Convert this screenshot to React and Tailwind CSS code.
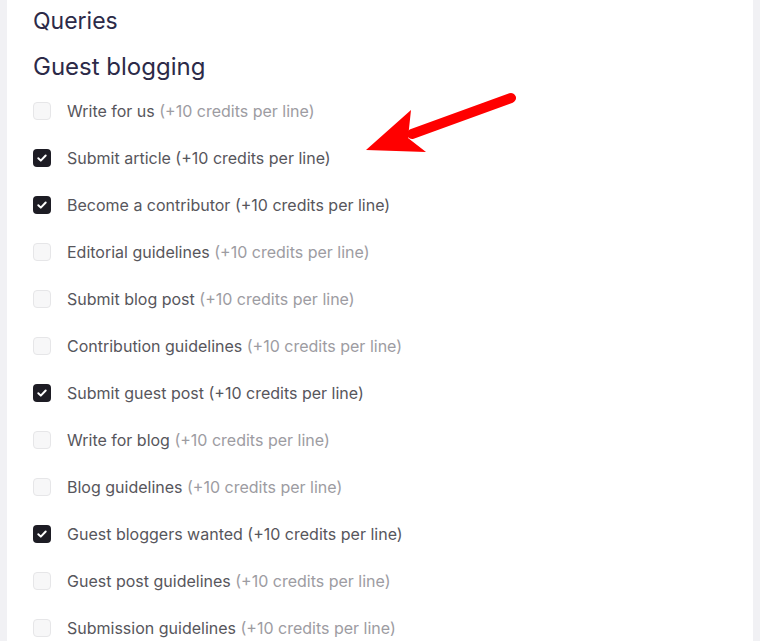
const rows = [
  ['Write for us', false],
  ['Submit article', true],
  ['Become a contributor', true],
  ['Editorial guidelines', false],
  ['Submit blog post', false],
  ['Contribution guidelines', false],
  ['Submit guest post', true],
  ['Write for blog', false],
  ['Blog guidelines', false],
  ['Guest bloggers wanted', true],
  ['Guest post guidelines', false],
  ['Submission guidelines', false],
]

function Check({ on }) {
  if (!on) return <span className="w-[18px] h-[18px] rounded-[4px] border border-[#e6e6e8] bg-[#f7f7f8] shrink-0" />
  return (
    <span className="w-[18px] h-[18px] rounded-[4px] bg-[#1d1c24] shrink-0 flex items-center justify-center">
      <svg width="12" height="12" viewBox="0 0 12 12" fill="none">
        <path d="M2.3 6.2 4.8 8.6 9.7 3.5" stroke="white" strokeWidth="2" strokeLinecap="round" strokeLinejoin="round" />
      </svg>
    </span>
  )
}

export default function App() {
  return (
    <div className="h-[641px] overflow-hidden bg-[#f1f1f4] px-[7px]" style={{ fontFamily: 'Inter, "Noto Sans", sans-serif' }}>
      <div className="relative h-full bg-white pl-[26px]">
        <h2 className="text-[23px] leading-none text-[#2c2a48] pt-[10px] font-normal">Queries</h2>
        <h2 className="text-[24px] leading-none text-[#2c2a48] mt-[22px] font-normal">Guest blogging</h2>
        <ul className="mt-[8px]">
          {rows.map(([label, on]) => (
            <li key={label} className="h-[47px] flex items-center gap-[16px] text-[16px]">
              <Check on={on} />
              <span className="text-[#57565c]">
                {label}{' '}
                <span className={on ? 'text-[#57565c]' : 'text-[#9d9ca2]'}>(+10 credits per line)</span>
              </span>
            </li>
          ))}
        </ul>
        <svg className="absolute left-[343px] top-[80px]" width="180" height="90" viewBox="0 0 180 90">
          <path d="M161 18 L62 54" stroke="#ff0000" strokeWidth="10" strokeLinecap="round" />
          <path d="M16 70 L61 30 L58 58 L76 72 Z" fill="#ff0000" />
        </svg>
      </div>
    </div>
  )
}
